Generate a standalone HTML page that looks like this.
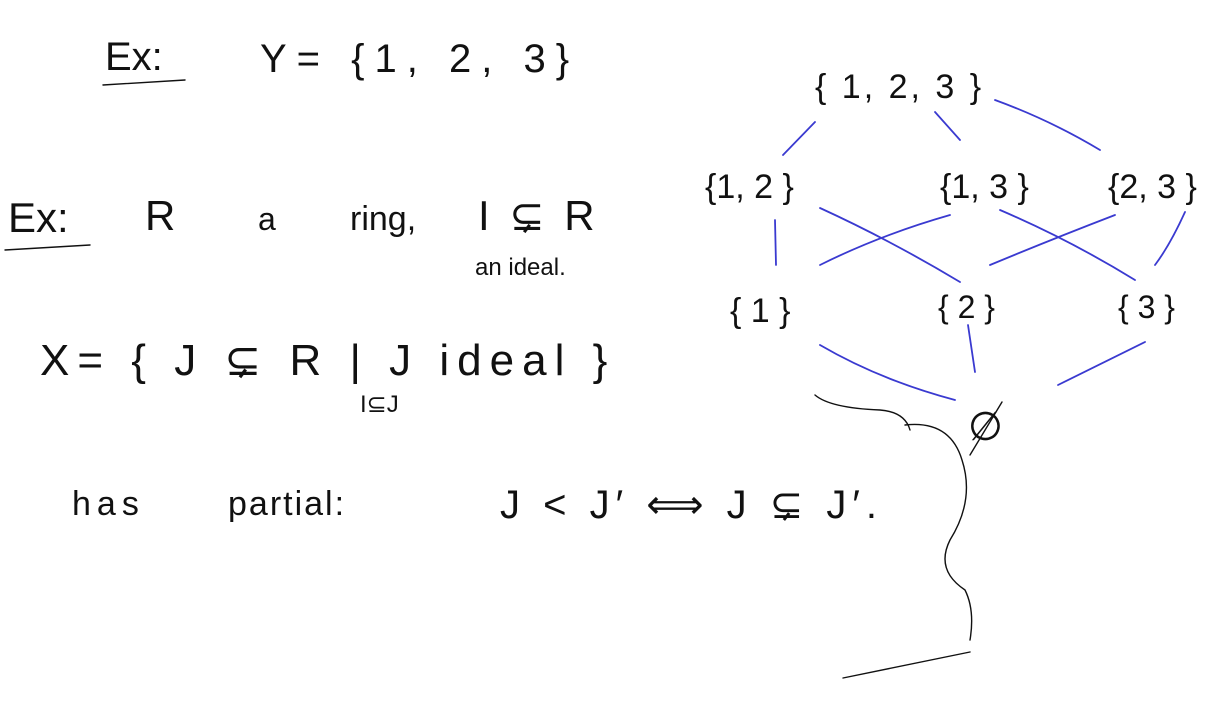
<!DOCTYPE html>
<html><head><meta charset="utf-8"><style>
html,body{margin:0;padding:0;background:#fff;width:1215px;height:719px;overflow:hidden}
svg text{font-family:"Liberation Sans",sans-serif;fill:#111;font-weight:normal}
</style></head><body>
<svg width="1215" height="719" viewBox="0 0 1215 719" xmlns="http://www.w3.org/2000/svg">
<g fill="none" stroke="#3a3ad0" stroke-width="1.8" stroke-linecap="round">
<path d="M815 122 L783 155"/><path d="M935 112 L960 140"/><path d="M995 100 Q1050 120 1100 150"/>
<path d="M775 220 L776 265"/><path d="M820 208 Q890 240 960 282"/><path d="M950 215 Q880 235 820 265"/>
<path d="M1000 210 Q1070 240 1135 280"/><path d="M1115 215 Q1050 240 990 265"/><path d="M1185 212 Q1170 245 1155 265"/>
<path d="M820 345 Q880 380 955 400"/><path d="M968 325 L975 372"/><path d="M1145 342 L1058 385"/>
</g>
<g fill="none" stroke="#111" stroke-width="1.4" stroke-linecap="round">
<path d="M815 395 Q830 408 880 410 Q905 412 910 430"/>
<path d="M905 425 Q950 420 962 460 Q975 500 950 540 Q935 570 965 590 Q975 610 970 640"/>
<path d="M970 652 L843 678"/>
<path d="M103 85 L185 80"/><path d="M5 250 L90 245"/>
<path d="M1002 402 L970 455"/>
</g>
<text x="105" y="70" font-size="40">Ex:</text>
<text x="260" y="72" font-size="40" letter-spacing="10">Y=  {1, 2, 3}</text>
<text x="8" y="232" font-size="42">Ex:</text>
<text x="145" y="230" font-size="42">R</text>
<text x="258" y="230" font-size="32">a</text>
<text x="350" y="230" font-size="34">ring,</text>
<text x="478" y="230" font-size="42" letter-spacing="4">I ⊊ R</text>
<text x="475" y="275" font-size="24">an ideal.</text>
<text x="40" y="375" font-size="44" letter-spacing="8">X= { J ⊊ R | J ideal }</text>
<text x="360" y="412" font-size="24">I⊆J</text>
<text x="72" y="515" font-size="34" letter-spacing="6">has</text>
<text x="228" y="515" font-size="34" letter-spacing="2">partial:</text>
<text x="500" y="518" font-size="40" letter-spacing="6">J &lt; J′ ⟺ J ⊊ J′.</text>
<text x="815" y="98" font-size="34" letter-spacing="3">{ 1, 2, 3 }</text>
<text x="705" y="198" font-size="34">{1, 2 }</text>
<text x="940" y="198" font-size="34">{1, 3 }</text>
<text x="1108" y="198" font-size="34">{2, 3 }</text>
<text x="730" y="322" font-size="34">{ 1 }</text>
<text x="938" y="318" font-size="32">{ 2 }</text>
<text x="1118" y="318" font-size="32">{ 3 }</text>
<text x="968" y="440" font-size="40">∅</text>
</svg>
</body></html>
